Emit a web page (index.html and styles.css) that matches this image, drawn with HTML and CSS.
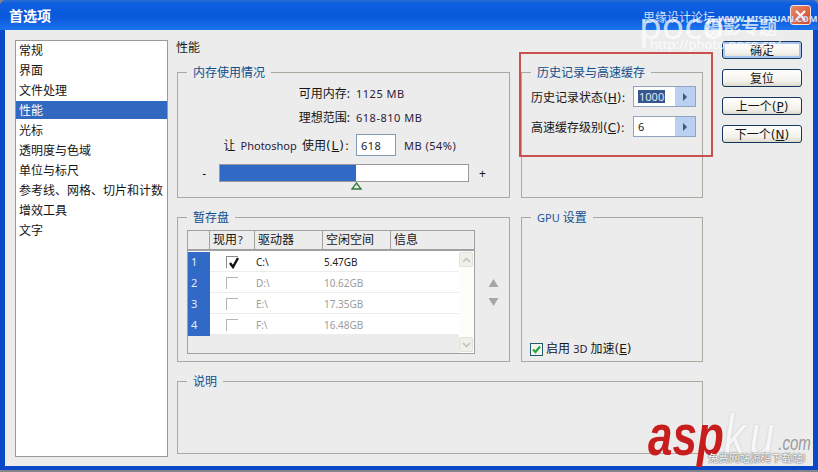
FILE: index.html
```html
<!DOCTYPE html>
<html>

<head>
    <title>首选项</title>
    <link rel="stylesheet" href="styles.css">
</head>

<body>
    <div class="dialog">
        <div class="titlebar">
            <span class="title">首选项</span>
            <button class="close" type="button" aria-label="关闭">
                <svg width="13" height="13" viewBox="0 0 13 13">
                    <path d="M2 2 L11 11 M11 2 L2 11" stroke="#fff" stroke-width="2.2" fill="none" />
                </svg>
            </button>
        </div>

        <div class="dialog-body">
            <ul class="nav">
                <li>常规</li>
                <li>界面</li>
                <li>文件处理</li>
                <li class="active">性能</li>
                <li>光标</li>
                <li>透明度与色域</li>
                <li>单位与标尺</li>
                <li>参考线、网格、切片和计数</li>
                <li>增效工具</li>
                <li>文字</li>
            </ul>

            <div class="panel">
                <h1 class="panel-title">性能</h1>

                <div class="groups">
                    <fieldset class="group memory">
                        <legend>内存使用情况</legend>
                        <div class="mem-row">
                            <span class="mem-label">可用内存:</span>
                            <span class="lat num">1125 MB</span>
                        </div>
                        <div class="mem-row">
                            <span class="mem-label">理想范围:</span>
                            <span class="lat num">618-810 MB</span>
                        </div>
                        <div class="mem-row mem-use">
                            <span class="mem-label">让 <span class="lat">Photoshop</span> 使用<span class="key">(<u>L</u>):</span></span>
                            <div class="mem-value">
                                <input class="mem-input" type="text" value="618">
                                <span class="lat num">MB (54%)</span>
                            </div>
                        </div>
                        <div class="slider-row">
                            <span class="minus">-</span>
                            <div class="slider">
                                <div class="slider-fill" style="width: 55%"></div>
                                <svg class="slider-thumb" width="11" height="8" viewBox="0 0 11 8">
                                    <path d="M5.5 1 L10 7 L1 7 Z" fill="#e8f4e4" stroke="#2f7a3a" stroke-width="1.3" />
                                </svg>
                            </div>
                            <span class="plus">+</span>
                        </div>
                    </fieldset>

                    <fieldset class="group">
                        <legend>历史记录与高速缓存</legend>
                        <div class="cache-row first">
                            <label class="cache-label">历史记录状态<span class="key">(<u>H</u>):</span></label>
                            <div class="spin">
                                <span class="spin-value"><span class="selected">1000</span></span>
                                <span class="spin-btn"><i class="spin-arrow"></i></span>
                            </div>
                        </div>
                        <div class="cache-row">
                            <label class="cache-label">高速缓存级别<span class="key">(<u>C</u>):</span></label>
                            <div class="spin">
                                <span class="spin-value">6</span>
                                <span class="spin-btn"><i class="spin-arrow"></i></span>
                            </div>
                        </div>
                    </fieldset>

                    <fieldset class="group scratch">
                        <legend>暂存盘</legend>
                        <div class="scratch-inner">
                            <div class="disks">
                                <div class="disks-head">
                                    <span></span>
                                    <span>现用<span class="lat">?</span></span>
                                    <span>驱动器</span>
                                    <span>空闲空间</span>
                                    <span>信息</span>
                                </div>
                                <div class="disks-body">
                                    <div class="disks-rows">
                                        <div class="disk">
                                            <span class="disk-no">1</span>
                                            <span class="disk-check">
                                                <i class="box">
                                                    <svg width="12" height="12" viewBox="0 0 12 12">
                                                        <path d="M2 6 L5 10 L10 1" stroke="#111" stroke-width="2.4" fill="none" />
                                                    </svg>
                                                </i>
                                            </span>
                                            <span class="disk-text">C:\</span>
                                            <span class="disk-text">5.47GB</span>
                                        </div>
                                        <div class="disk off">
                                            <span class="disk-no">2</span>
                                            <span class="disk-check"><i class="box"></i></span>
                                            <span class="disk-text">D:\</span>
                                            <span class="disk-text">10.62GB</span>
                                        </div>
                                        <div class="disk off">
                                            <span class="disk-no">3</span>
                                            <span class="disk-check"><i class="box"></i></span>
                                            <span class="disk-text">E:\</span>
                                            <span class="disk-text">17.35GB</span>
                                        </div>
                                        <div class="disk off">
                                            <span class="disk-no">4</span>
                                            <span class="disk-check"><i class="box"></i></span>
                                            <span class="disk-text">F:\</span>
                                            <span class="disk-text">16.48GB</span>
                                        </div>
                                    </div>
                                    <div class="scrollbar">
                                        <span class="scroll-btn">
                                            <svg width="9" height="6" viewBox="0 0 9 6">
                                                <path d="M1 5 L4.5 1.5 L8 5" stroke="#c4c4bc" stroke-width="1.6" fill="none" />
                                            </svg>
                                        </span>
                                        <span class="scroll-btn">
                                            <svg width="9" height="6" viewBox="0 0 9 6">
                                                <path d="M1 1 L4.5 4.5 L8 1" stroke="#c4c4bc" stroke-width="1.6" fill="none" />
                                            </svg>
                                        </span>
                                    </div>
                                </div>
                            </div>
                            <div class="move">
                                <svg width="11" height="8" viewBox="0 0 11 8"><path d="M5.5 0 L10.5 8 L0.5 8 Z" fill="#a3a8a6" /></svg>
                                <svg width="11" height="8" viewBox="0 0 11 8"><path d="M0.5 0 L10.5 0 L5.5 8 Z" fill="#a3a8a6" /></svg>
                            </div>
                        </div>
                    </fieldset>

                    <fieldset class="group gpu">
                        <legend><span class="lat">GPU</span> 设置</legend>
                        <label class="gpu-check">
                            <i class="xp-box">
                                <svg width="11" height="11" viewBox="0 0 11 11">
                                    <path d="M2 5.5 L4.5 8 L9 2.5" stroke="#2aa53a" stroke-width="2.2" fill="none" />
                                </svg>
                            </i>
                            <span>启用 <span class="lat">3D</span> 加速<span class="key">(<u>E</u>)</span></span>
                        </label>
                    </fieldset>

                    <fieldset class="group notes">
                        <legend>说明</legend>
                    </fieldset>
                </div>
            </div>

            <div class="actions">
                <button class="btn default" type="button">确定</button>
                <button class="btn" type="button">复位</button>
                <button class="btn" type="button">上一个<span class="key">(<u>P</u>)</span></button>
                <button class="btn" type="button">下一个<span class="key">(<u>N</u>)</span></button>
            </div>
        </div>

        <!-- annotation and watermarks, they sit on top of the dialog -->
        <div class="callout"></div>
        <div class="mark-site">思缘设计论坛 <span class="mark-url">WWW.MISSYUAN.COM</span></div>
        <div class="mark-poco">poco</div>
        <div class="mark-poco-cn">摄影专题</div>
        <div class="mark-poco-url">http://photo.poco.cn/</div>
        <div class="mark-asp"><span class="asp">asp</span><span class="ku">ku</span><span class="com">.com</span></div>
        <div class="mark-free">免费网站源码下载站!</div>
    </div>
</body>

</html>
```

FILE: styles.css
```css
* {
    box-sizing: border-box;
}

body {
    margin: 0;
    background-color: #85868c;
    font-family: "Noto Sans", "Noto Sans CJK SC", sans-serif;
    font-size: 12px;
    color: #161616;
}

.lat {
    font-size: 11px;
    color: #2b1a3a;
}

.num {
    letter-spacing: 0.5px;
}

.key {
    font-family: "DejaVu Sans", sans-serif;
}

u {
    text-underline-offset: 1px;
}

.dialog {
    position: relative;
    width: 818px;
    height: 470px;
    display: flex;
    flex-direction: column;
    overflow: hidden;
    border-radius: 6px 6px 0 0;
    background-color: #0a48c8;
}

/* title bar */
.titlebar {
    height: 30px;
    flex: none;
    display: flex;
    align-items: center;
    justify-content: space-between;
    padding: 0 7px 0 9px;
    background: linear-gradient(#2a6cd4 0, #0d5fe0 12%, #0a58dc 55%, #1b74ec 100%);
}

.title {
    color: #fff;
    font-size: 14px;
    font-weight: bold;
}

.close {
    width: 21px;
    height: 20px;
    padding: 0;
    display: flex;
    align-items: center;
    justify-content: center;
    border: 1px solid #f4e6de;
    border-radius: 3px;
    background: linear-gradient(135deg, #e88a68, #d2482a);
}

/* main area */
.dialog-body {
    flex: 1;
    display: flex;
    padding: 10px 0 0 10px;
    border-style: solid;
    border-color: #0a48c8;
    border-width: 0 5px 4px 5px;
    background-color: #ececec;
}

.nav {
    width: 153px;
    height: 417px;
    flex: none;
    margin: 0;
    padding: 0;
    list-style: none;
    border: 1px solid #9a9a9a;
    background-color: #fff;
}

.nav li {
    height: 18px;
    margin-bottom: 2px;
    padding-left: 3px;
    line-height: 20px;
}

.nav .active {
    background-color: #3169c0;
    color: #fff;
}

.panel {
    width: 526px;
    flex: none;
    margin-left: 9px;
}

.panel-title {
    height: 25px;
    margin: 0 0 0 -1px;
    font-size: 12px;
    font-weight: normal;
    line-height: 16px;
}

.groups {
    display: grid;
    grid-template-columns: 333px 182px;
    grid-template-rows: 133px 152px 80px;
    gap: 12px 11px;
}

.group {
    min-width: 0;
    margin: 0;
    padding: 0;
    border: 1px solid #a9a99f;
}

.group legend {
    margin-left: 9px;
    padding: 1px 6px 0;
    color: #0f4f8c;
    line-height: 14px;
}

.group legend .lat {
    color: #24509c;
}

/* memory */
.mem-row {
    display: grid;
    grid-template-columns: 172px 1fr;
    column-gap: 6px;
    height: 24px;
    align-items: center;
}

.memory legend + .mem-row {
    margin-top: 1px;
}

.mem-label {
    text-align: right;
    word-spacing: 2px;
}

.mem-label .key {
    letter-spacing: 1px;
}

.mem-use {
    height: 22px;
    margin-top: 5px;
}

.mem-value {
    display: flex;
    align-items: center;
    gap: 8px;
}

.mem-input {
    width: 40px;
    height: 22px;
    padding: 0 4px;
    border: 1px solid #7f9db9;
    font-family: inherit;
    font-size: 11px;
    letter-spacing: 0.5px;
    color: #222;
}

.slider-row {
    display: flex;
    align-items: center;
    margin-top: 8px;
}

.minus {
    width: 41px;
    padding-right: 13px;
    text-align: right;
}

.plus {
    padding-left: 10px;
}

.slider {
    position: relative;
    width: 250px;
    height: 18px;
    border: 1px solid #9a9a9a;
    background-color: #fff;
}

.slider-fill {
    height: 100%;
    background-color: #3169c6;
}

.slider-thumb {
    position: absolute;
    top: 17px;
    left: 131px;
}

/* history and cache */
.cache-row {
    display: flex;
    align-items: center;
    margin-top: 9px;
    padding-left: 9px;
}

.cache-row.first {
    margin-top: 6px;
}

.cache-label {
    width: 102px;
}

.spin {
    width: 63px;
    height: 21px;
    display: flex;
    border: 1px solid #8ea4bf;
    background-color: #fff;
}

.spin-value {
    flex: 1;
    padding-left: 4px;
    font-size: 11px;
    line-height: 19px;
    color: #222;
}

.selected {
    display: inline-block;
    height: 13px;
    padding: 0 1px;
    line-height: 13px;
    background-color: #36568f;
    color: #dfe6f4;
}

.spin-btn {
    width: 20px;
    display: flex;
    align-items: center;
    justify-content: center;
    background-color: #bacff2;
}

.spin-arrow {
    width: 0;
    height: 0;
    border-left: 4px solid #3a5878;
    border-top: 4px solid transparent;
    border-bottom: 4px solid transparent;
}

/* scratch disks */
.scratch-inner {
    display: flex;
    align-items: center;
    gap: 13px;
    padding: 5px 0 0 9px;
}

.disks {
    width: 288px;
    height: 124px;
    border: 1px solid #a0a0a0;
    background-color: #ececec;
}

.disks-head,
.disk {
    display: grid;
    grid-template-columns: 22px 45px 68px 68px;
}

.disks-head {
    grid-template-columns: 22px 45px 68px 68px 1fr;
    height: 20px;
    border-bottom: 2px solid #a0a0a0;
    line-height: 18px;
}

.disks-head span {
    padding-left: 3px;
    border-right: 1px solid #a0a0a0;
}

.disks-head span span {
    padding: 0 0 0 1px;
    border: 0;
}

.disks-head span:last-child {
    border-right: 0;
}

.disks-body {
    display: flex;
    height: 102px;
}

.disks-rows {
    flex: 1;
}

.disk {
    height: 21px;
    align-items: center;
    border-bottom: 1px solid #ececec;
    background-color: #fff;
    font-size: 10px;
    line-height: 22px;
}

.disk-no {
    height: 21px;
    padding-left: 3px;
    margin-bottom: -1px;
    background-color: #3169c6;
    color: #e6ecf8;
    font-size: 11px;
    line-height: 20px;
}

.disk-check {
    display: flex;
    padding-left: 16px;
}

.box {
    width: 12px;
    height: 12px;
    display: block;
    border-top: 1px solid #8a8a8a;
    border-left: 1px solid #8a8a8a;
}

.disk .box svg {
    display: block;
    margin-left: 1px;
}

.disk-text {
    padding-left: 1px;
    color: #222;
}

.off .disk-text {
    color: #9c9c9c;
}

.off .box {
    border-color: #b4b4b4;
}

.scrollbar {
    width: 15px;
    display: flex;
    flex-direction: column;
    justify-content: space-between;
    padding: 1px 1px 1px 0;
    background-color: #fdfdfa;
}

.scroll-btn {
    height: 15px;
    display: flex;
    align-items: center;
    justify-content: center;
    border: 1px solid #e2e2da;
    border-radius: 2px;
    background-color: #f0f0ea;
}

.move {
    display: flex;
    flex-direction: column;
    gap: 11px;
}

.move svg {
    display: block;
}

/* gpu */
.gpu {
    display: flex;
    flex-direction: column;
    justify-content: flex-end;
}

.gpu-check {
    display: flex;
    align-items: center;
    gap: 3px;
    padding: 0 0 4px 8px;
    line-height: 15px;
}

.xp-box {
    width: 13px;
    height: 13px;
    display: flex;
    align-items: center;
    justify-content: center;
    border: 1px solid #1f5a6e;
    background-color: #f4f4ee;
}

/* notes */
.notes {
    grid-column: 1 / 3;
}

/* buttons */
.actions {
    width: 80px;
    flex: none;
    display: flex;
    flex-direction: column;
    gap: 10px;
    margin-left: 19px;
    padding-top: 1px;
}

.btn {
    height: 18px;
    padding: 1px 0 0;
    border: 1px solid #14375f;
    border-radius: 3px;
    background: linear-gradient(#fff, #f2f1ea 70%, #dcd9ce);
    font-family: inherit;
    font-size: 12px;
    line-height: 14px;
    color: #161616;
}

.btn.default {
    box-shadow: inset 0 0 0 2px #a9c4ec;
}

/* red annotation box */
.callout {
    position: absolute;
    left: 519px;
    top: 52px;
    width: 194px;
    height: 105px;
    border: 2px solid #c9504f;
}

/* watermarks */
.mark-site {
    position: absolute;
    top: 8px;
    left: 643px;
    color: #cfe0fb;
    white-space: nowrap;
}

.mark-url {
    font-size: 9px;
    font-weight: bold;
}

.mark-poco {
    position: absolute;
    top: 3px;
    left: 639px;
    color: rgba(255, 255, 255, 0.72);
    font-size: 37px;
    line-height: 44px;
}

.mark-poco-cn {
    position: absolute;
    top: 17px;
    left: 705px;
    color: rgba(255, 255, 255, 0.72);
    font-size: 18px;
    font-weight: bold;
    line-height: 20px;
}

.mark-poco-url {
    position: absolute;
    top: 37px;
    left: 650px;
    color: rgba(255, 255, 255, 0.85);
    font-size: 13px;
    line-height: 14px;
}

.mark-asp {
    position: absolute;
    top: 412px;
    left: 648px;
    font-family: "Liberation Sans", sans-serif;
    font-weight: bold;
    font-style: italic;
    line-height: 56px;
    white-space: nowrap;
    transform: scaleY(1.3);
    transform-origin: 0 43px;
}

.asp {
    color: #c81d1d;
    font-size: 44px;
}

.ku {
    color: #f6f6f8;
    font-size: 44px;
    font-weight: normal;
    letter-spacing: 4px;
    text-shadow: 0 0 2px #c4c4cc;
}

.com {
    color: #9a9aa0;
    font-size: 15px;
    font-weight: normal;
    vertical-align: 4px;
}

.mark-free {
    position: absolute;
    top: 451px;
    left: 708px;
    color: #fff;
    font-size: 10.5px;
    line-height: 14px;
    white-space: nowrap;
    text-shadow: 0 0 2px #555, 0 0 1px #555;
}
```
